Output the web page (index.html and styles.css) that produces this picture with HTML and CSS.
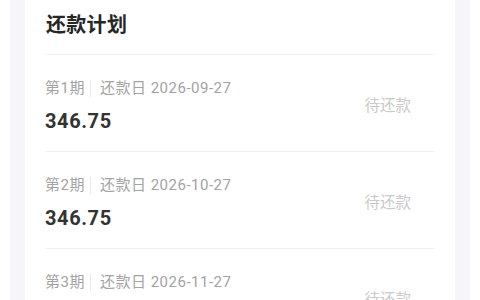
FILE: index.html
```html
<!DOCTYPE html>
<html lang="zh-CN">
<head>
<meta charset="utf-8">
<title>还款计划</title>
<link rel="stylesheet" href="styles.css">
</head>
<body>
<div class="page">
  <section class="card">
    <h2 class="title">还款计划</h2>
    <div class="row">
      <div class="info">
        <div class="meta"><span>第1期</span><i class="sep"></i><span>还款日 2026-09-27</span></div>
        <div class="amount">346.75</div>
      </div>
      <div class="status">待还款</div>
    </div>
    <div class="row">
      <div class="info">
        <div class="meta"><span>第2期</span><i class="sep"></i><span>还款日 2026-10-27</span></div>
        <div class="amount">346.75</div>
      </div>
      <div class="status">待还款</div>
    </div>
    <div class="row">
      <div class="info">
        <div class="meta"><span>第3期</span><i class="sep"></i><span>还款日 2026-11-27</span></div>
        <div class="amount">346.75</div>
      </div>
      <div class="status">待还款</div>
    </div>
  </section>
</div>
</body>
</html>
```
FILE: styles.css
```css
html, body {
  margin: 0;
  padding: 0;
  background: #ffffff;
  height: 300px;
  overflow: hidden;
}
body {
  font-family: Roboto, "Noto Sans CJK SC", sans-serif;
}
.page {
  margin: 0 10px;
  padding: 0 15px;
  background: #f5f5fa;
  min-height: 300px;
}
.card {
  background: #ffffff;
  padding: 0 20px;
}
.title {
  margin: 0;
  padding: 11px 0 15px 1px;
  font-size: 20px;
  line-height: 28px;
  font-weight: 700;
  color: #262626;
  letter-spacing: 0.3px;
  border-bottom: 1px solid #f0f0f0;
}
.row {
  display: flex;
  align-items: center;
  padding: 23px 0 17px;
  border-bottom: 1px solid #f0f0f0;
}
.info {
  flex: 1;
}
.meta {
  display: flex;
  align-items: center;
  font-size: 15px;
  line-height: 20px;
  letter-spacing: 0.5px;
  color: #a3a3a3;
}
.sep {
  width: 1px;
  height: 17px;
  background: #e8e8e8;
  margin: 0 9px 0 5px;
}
.amount {
  margin-top: 10px;
  font-size: 20px;
  line-height: 26px;
  font-weight: 700;
  color: #333333;
  letter-spacing: 0.6px;
}
.status {
  margin: 0 24px 4px 0;
  font-size: 15.5px;
  color: #cacaca;
}
```
